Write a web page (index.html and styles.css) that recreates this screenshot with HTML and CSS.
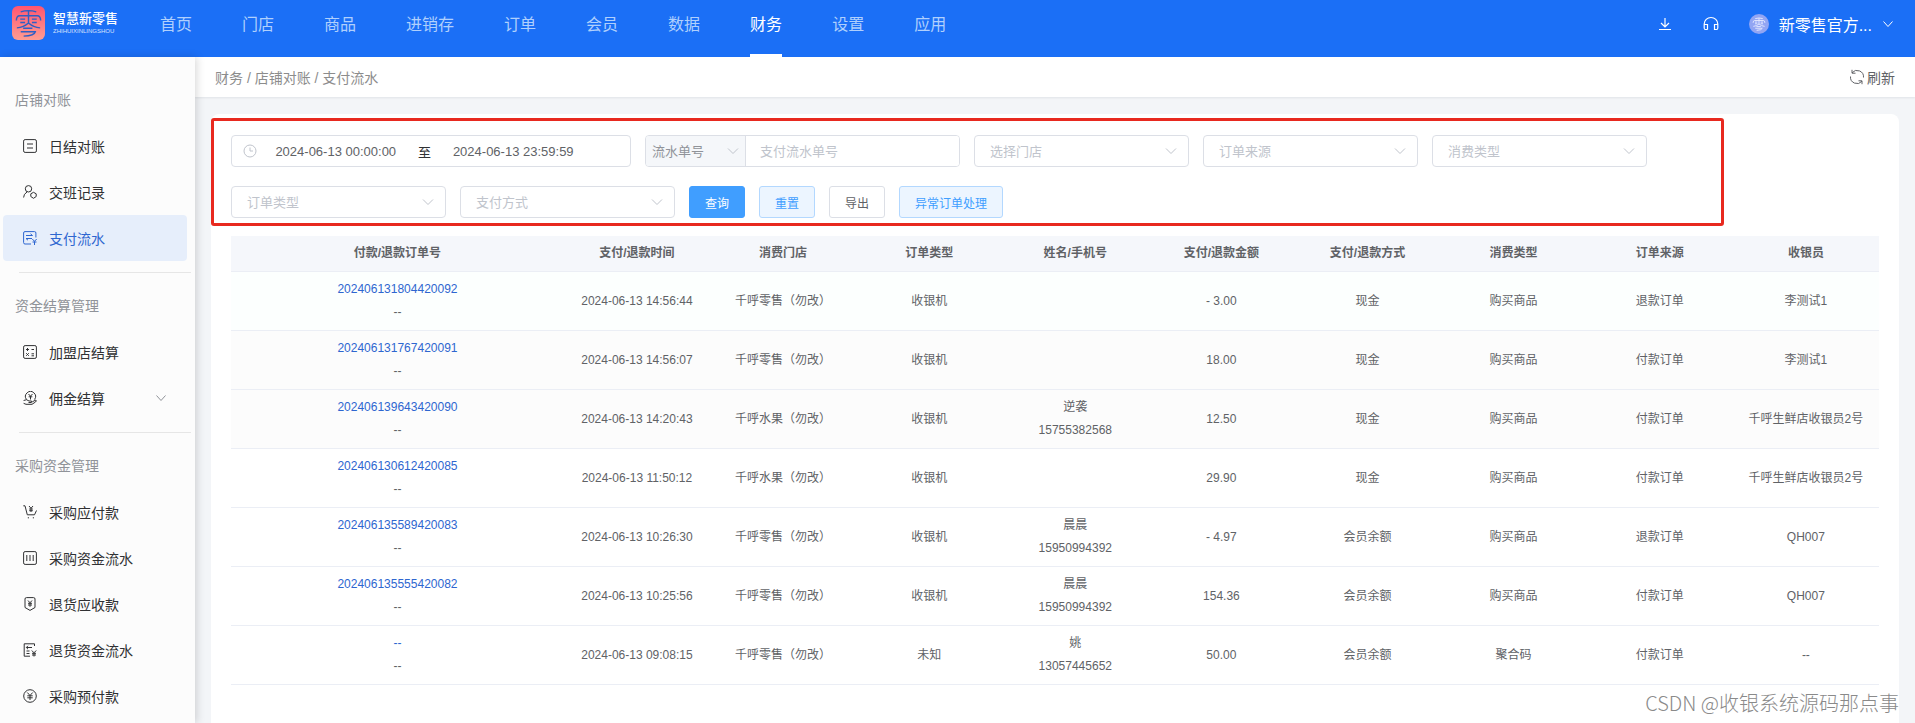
FILE: index.html
```html
<!DOCTYPE html>
<html lang="zh-CN">
<head>
  <meta charset="UTF-8">
  <title>支付流水</title>
  <meta name="viewport" content="width=device-width, initial-scale=1">
  <link rel="stylesheet" href="styles.css">
</head>
<body>

<svg class="sprite" aria-hidden="true">
  <symbol id="mark" viewBox="0 0 34 34">
    <path d="M9 5.500Q17 3 25 5.500M17 4.500V17M4.500 14.500Q4.500 9.500 8 9.500H26Q29.500 9.500 29.500 14.500M8.500 13H13.500M20.500 13H25.500M8.500 16.500H13.500M20.500 16.500H25.500M5 22Q12 21.500 17 17Q22 21.500 29 22M11.500 22.500H21M9 26H24Q23 30 12 30.500"/>
  </symbol>
  <symbol id="down" viewBox="0 0 12 12">
    <path d="M1.500 3.500L6 8.500L10.500 3.500"/>
  </symbol>
</svg>

<header class="header">
  <a class="logo" href="#">
    <span class="logo-mark"><svg><use href="#mark"/></svg></span>
    <span class="logo-text">
      <b>智慧新零售</b>
      <small>ZHIHUIXINLINGSHOU</small>
    </span>
  </a>
  <nav class="nav">
    <a href="#">首页</a>
    <a href="#">门店</a>
    <a href="#">商品</a>
    <a href="#">进销存</a>
    <a href="#">订单</a>
    <a href="#">会员</a>
    <a href="#">数据</a>
    <a href="#" class="active">财务</a>
    <a href="#">设置</a>
    <a href="#">应用</a>
  </nav>
  <div class="tools">
    <button class="tool" aria-label="下载">
      <svg viewBox="0 0 16 16"><path d="M8 2V10.500M4 7L8 11L12 7M2 13.500H14"/></svg>
    </button>
    <button class="tool" aria-label="客服">
      <svg viewBox="0 0 16 16"><path d="M4.500 13.500H2.500Q1.200 13.500 1.200 12V8A6.800 6.500 0 0 1 14.800 8V12Q14.800 13.500 13.500 13.500H11.500V8.500H14.800M1.200 8.500H4.500V13.500"/></svg>
    </button>
    <button class="account">
      <span class="avatar"><svg><use href="#mark"/></svg></span>
      <span>新零售官方...</span>
      <svg class="account-arrow"><use href="#down"/></svg>
    </button>
  </div>
</header>

<div class="layout">
  <aside class="sidebar">
    <section class="menu">
      <h2>店铺对账</h2>
      <a href="#">
        <svg viewBox="0 0 14 14"><rect x=".6" y=".6" width="12.800" height="12.800" rx="1.500"/><path d="M4 5H10M4 9H10"/></svg>
        日结对账
      </a>
      <a href="#">
        <svg viewBox="0 0 14 14"><circle cx="5.500" cy="3.800" r="3.200"/><path d="M.6 12.500Q.6 9 4 7M10.500 7.300L13.200 8.800V11.500L10.500 13.300L7.800 11.500V8.800Z"/></svg>
        交班记录
      </a>
      <a href="#" class="active">
        <svg viewBox="0 0 14 14"><path d="M8 13H2Q.6 13 .6 11.600V2Q.6 .6 2 .6H11.500Q12.900 .6 12.900 2V6.500M3 4.500H9.500L7.500 2.800M9 7.500H3L5 9.200M9.300 8L11.500 10.300L13.700 8M11.500 10.300V14M9.500 11H13.500"/></svg>
        支付流水
      </a>
    </section>
    <section class="menu">
      <h2>资金结算管理</h2>
      <a href="#">
        <svg viewBox="0 0 14 14"><rect x=".6" y=".6" width="12.800" height="12.800" rx="1.500"/><path d="M3 4.500H6M4.500 3V6M8.500 4.500H11M3.200 8.200L5.800 10.800M5.800 8.200L3.200 10.800M8.500 8.800H11M8.500 10.800H11"/></svg>
        加盟店结算
      </a>
      <a href="#">
        <svg viewBox="0 0 14 14"><path d="M3.500 8.500A5 5 0 1 1 11.500 8.500M5.500 3L7.500 5.200L9.500 3M7.500 5.200V8.500M5.700 5.800H9.300M.6 9.500L3.500 8.700L6 10H8.500Q9.500 11.500 8 11.500H5.500M9.300 10.800L12.800 9Q13.800 10 12.500 11L9 13.300H3L.6 12.300"/></svg>
        佣金结算
        <svg class="menu-arrow"><use href="#down"/></svg>
      </a>
    </section>
    <section class="menu">
      <h2>采购资金管理</h2>
      <a href="#">
        <svg viewBox="0 0 14 14"><path d="M.3 .8H2L4.300 9.800H11.500L13.500 5.500M6 1L8 3.300L10 1M8 3.300V7M6.200 4H9.800M6.200 5.700H9.800M4.800 12.800H6M9.800 12.800H11"/></svg>
        采购应付款
      </a>
      <a href="#">
        <svg viewBox="0 0 14 14"><rect x=".6" y=".6" width="12.800" height="12.800" rx="1.500"/><path d="M3.800 4V10M7 4V10M10.200 4V10"/></svg>
        采购资金流水
      </a>
      <a href="#">
        <svg viewBox="0 0 14 14"><path d="M2 2Q2 .6 3.500 .6H10.500Q12 .6 12 2V10.500L7 13.400L2 10.500ZM5 3.500L7 5.800L9 3.500M7 5.800V9.800M5 6.300H9M5 8H9"/></svg>
        退货应收款
      </a>
      <a href="#">
        <svg viewBox="0 0 14 14"><path d="M7 13.200H1.200V.8H11.500V3M3.500 4.500H9M5 2.800L3.300 4.500L5 6.200M3.500 8H6.500M3.500 10.500H6.500M8.800 7.500L11 9.800L13.200 7.500M11 9.800V13.500M9 10.300H13M9 12H13"/></svg>
        退货资金流水
      </a>
      <a href="#">
        <svg viewBox="0 0 14 14"><circle cx="7" cy="7" r="6.300"/><path d="M4.300 3.500L7 6.500L9.700 3.500M7 6.500V11M4.300 6.800H9.700M4.300 8.800H9.700"/></svg>
        采购预付款
      </a>
    </section>
  </aside>

  <main class="main">
    <div class="topbar">
      <div class="crumbs">财务 / 店铺对账 / 支付流水</div>
      <button class="refresh">
        <svg viewBox="0 0 16 16"><path d="M3 3.800A6.500 6.500 0 0 1 14.500 8.500M13 12.200A6.500 6.500 0 0 1 1.500 7.500M3 .8V4.200H6.500M13 15.200V11.800H9.500"/></svg>刷新
      </button>
    </div>

    <div class="card">
      <form class="filters">
        <div class="date-range">
          <svg viewBox="0 0 14 14"><circle cx="7" cy="7" r="6"/><path d="M7 3.500V7H10"/></svg>
          <input type="text" aria-label="开始时间" value="2024-06-13 00:00:00">
          <span>至</span>
          <input type="text" aria-label="结束时间" value="2024-06-13 23:59:59">
        </div>
        <div class="combo">
          <select aria-label="单号类型"><option>流水单号</option></select>
          <input type="text" aria-label="支付流水单号" placeholder="支付流水单号">
        </div>
        <select class="select" aria-label="选择门店"><option>选择门店</option></select>
        <select class="select" aria-label="订单来源"><option>订单来源</option></select>
        <select class="select" aria-label="消费类型"><option>消费类型</option></select>
        <select class="select" aria-label="订单类型"><option>订单类型</option></select>
        <select class="select" aria-label="支付方式"><option>支付方式</option></select>
        <button type="button" class="btn primary">查询</button>
        <button type="button" class="btn plain">重置</button>
        <button type="button" class="btn">导出</button>
        <button type="button" class="btn plain">异常订单处理</button>
      </form>

      <table class="table">
        <thead>
          <tr>
            <th class="col-order">付款/退款订单号</th>
            <th>支付/退款时间</th>
            <th>消费门店</th>
            <th>订单类型</th>
            <th>姓名/手机号</th>
            <th>支付/退款金额</th>
            <th>支付/退款方式</th>
            <th>消费类型</th>
            <th>订单来源</th>
            <th>收银员</th>
          </tr>
        </thead>
        <tbody>
          <tr class="hover">
            <td><a href="#">202406131804420092</a><br>--</td>
            <td>2024-06-13 14:56:44</td>
            <td>千呼零售（勿改）</td>
            <td>收银机</td>
            <td></td>
            <td>- 3.00</td>
            <td>现金</td>
            <td>购买商品</td>
            <td>退款订单</td>
            <td>李测试1</td>
          </tr>
          <tr class="shade">
            <td><a href="#">202406131767420091</a><br>--</td>
            <td>2024-06-13 14:56:07</td>
            <td>千呼零售（勿改）</td>
            <td>收银机</td>
            <td></td>
            <td>18.00</td>
            <td>现金</td>
            <td>购买商品</td>
            <td>付款订单</td>
            <td>李测试1</td>
          </tr>
          <tr class="shade">
            <td><a href="#">202406139643420090</a><br>--</td>
            <td>2024-06-13 14:20:43</td>
            <td>千呼水果（勿改）</td>
            <td>收银机</td>
            <td>逆袭<br>15755382568</td>
            <td>12.50</td>
            <td>现金</td>
            <td>购买商品</td>
            <td>付款订单</td>
            <td>千呼生鲜店收银员2号</td>
          </tr>
          <tr>
            <td><a href="#">202406130612420085</a><br>--</td>
            <td>2024-06-13 11:50:12</td>
            <td>千呼水果（勿改）</td>
            <td>收银机</td>
            <td></td>
            <td>29.90</td>
            <td>现金</td>
            <td>购买商品</td>
            <td>付款订单</td>
            <td>千呼生鲜店收银员2号</td>
          </tr>
          <tr>
            <td><a href="#">202406135589420083</a><br>--</td>
            <td>2024-06-13 10:26:30</td>
            <td>千呼零售（勿改）</td>
            <td>收银机</td>
            <td>晨晨<br>15950994392</td>
            <td>- 4.97</td>
            <td>会员余额</td>
            <td>购买商品</td>
            <td>退款订单</td>
            <td>QH007</td>
          </tr>
          <tr>
            <td><a href="#">202406135555420082</a><br>--</td>
            <td>2024-06-13 10:25:56</td>
            <td>千呼零售（勿改）</td>
            <td>收银机</td>
            <td>晨晨<br>15950994392</td>
            <td>154.36</td>
            <td>会员余额</td>
            <td>购买商品</td>
            <td>付款订单</td>
            <td>QH007</td>
          </tr>
          <tr>
            <td><a href="#">--</a><br>--</td>
            <td>2024-06-13 09:08:15</td>
            <td>千呼零售（勿改）</td>
            <td>未知</td>
            <td>姚<br>13057445652</td>
            <td>50.00</td>
            <td>会员余额</td>
            <td>聚合码</td>
            <td>付款订单</td>
            <td>--</td>
          </tr>
        </tbody>
      </table>
    </div>
  </main>
</div>

<div class="watermark">CSDN @收银系统源码那点事</div>

</body>
</html>
```
FILE: styles.css
```css
* {
  box-sizing: border-box;
}

body {
  margin: 0;
  height: 100vh;
  display: flex;
  flex-direction: column;
  overflow: hidden;
  background: #f3f5f8;
  color: #606266;
  font-family: "Liberation Sans", "Noto Sans CJK SC", sans-serif;
  font-size: 14px;
}

a {
  text-decoration: none;
}

button,
input,
select {
  font-family: inherit;
  margin: 0;
}

button {
  cursor: pointer;
}

svg {
  fill: none;
  stroke: currentColor;
  flex: none;
}

.sprite {
  display: none;
}

/* header */
.header {
  flex: none;
  height: 57px;
  display: flex;
  background: #1b6ff6;
  color: #fff;
}

.logo {
  width: 160px;
  padding: 6px 0 0 12px;
  display: flex;
  gap: 8px;
  color: #fff;
}

.logo-mark {
  width: 33px;
  height: 34px;
  border-radius: 6px;
  background: linear-gradient(#ff5570, #ff9d92);
  color: #2f5fc4;
}

.logo-mark svg {
  width: 33px;
  height: 34px;
  stroke-width: 1.5;
}

.logo-text {
  display: flex;
  flex-direction: column;
  padding-top: 5px;
}

.logo-text b {
  font-size: 13px;
  line-height: 16px;
  font-weight: 500;
}

.logo-text small {
  font-size: 6px;
  line-height: 8px;
  opacity: 0.8;
}

.nav {
  display: flex;
  gap: 50px;
}

.nav a {
  height: 57px;
  line-height: 50px;
  font-size: 16px;
  color: #b0d0fd;
  border-bottom: 3px solid transparent;
}

.nav a.active {
  color: #fff;
  border-bottom-color: #fff;
}

.tools {
  margin-left: auto;
  height: 48px;
  padding-right: 21px;
  display: flex;
  align-items: center;
}

.tools button {
  display: flex;
  align-items: center;
  padding: 0;
  border: 0;
  background: none;
  color: #fff;
  font-size: 16px;
}

.tool svg {
  width: 16px;
  height: 16px;
  stroke-width: 1.2;
}

.tools .tool {
  margin-right: 30px;
}

.account span + svg {
  margin-left: 10px;
}

.avatar {
  width: 20px;
  height: 20px;
  margin-right: 10px;
  border-radius: 50%;
  background: #92a5f3;
  color: #e4e9ff;
}

.avatar svg {
  display: block;
  width: 20px;
  height: 20px;
  padding: 2px;
  stroke-width: 2;
}

.account-arrow {
  width: 12px;
  height: 12px;
}

/* sidebar */
.layout {
  flex: 1;
  min-height: 0;
  display: flex;
}

.sidebar {
  flex: none;
  width: 195px;
  padding-top: 20px;
  background: #fcfcfc;
  box-shadow: 2px 0 8px rgba(0, 0, 0, 0.15);
  z-index: 1;
}

.menu h2 {
  margin: 0;
  padding-left: 15px;
  line-height: 46px;
  font-size: 14px;
  font-weight: normal;
  color: #909399;
}

.menu + .menu::before {
  content: "";
  display: block;
  height: 1px;
  margin: 11px 4px 10px 19px;
  background: #e6e6e6;
}

.menu a {
  display: flex;
  align-items: center;
  gap: 12px;
  height: 46px;
  margin: 0 8px 0 3px;
  padding: 0 20px;
  border-radius: 4px;
  color: #303133;
}

.menu a.active {
  background: #e6eefb;
  color: #2e66d0;
}

.menu svg {
  width: 14px;
  height: 14px;
}

.menu .menu-arrow {
  width: 12px;
  height: 12px;
  margin-left: auto;
  color: #909399;
}

/* content */
.main {
  flex: 1;
  min-width: 0;
  display: flex;
  flex-direction: column;
}

.topbar {
  flex: none;
  height: 40px;
  padding: 0 20px;
  display: flex;
  align-items: center;
  justify-content: space-between;
  background: #fff;
  box-shadow: 0 1px 2px rgba(0, 21, 41, 0.08);
}

.crumbs {
  color: #8c8c8c;
}

.refresh {
  display: flex;
  align-items: center;
  gap: 2px;
  padding: 0;
  border: 0;
  background: none;
  color: #606266;
  font-size: 14px;
}

.refresh svg {
  width: 16px;
  height: 16px;
}

.card {
  flex: 1;
  margin: 17px 16px 0;
  padding-top: 4px;
  background: #fff;
  border-radius: 8px 8px 0 0;
}

.filters {
  display: flex;
  flex-wrap: wrap;
  gap: 19px 14px;
  margin-right: 175px;
  padding: 14px 16px 5px 17px;
  border: 3px solid #e8291f;
  border-radius: 3px;
}

.select,
.date-range,
.combo {
  height: 32px;
  border: 1px solid #dcdfe6;
  border-radius: 4px;
  background-color: #fff;
  font-size: 13px;
}

.filters select {
  appearance: none;
  background-image: url("data:image/svg+xml,%3Csvg xmlns='http://www.w3.org/2000/svg' viewBox='0 0 12 12' fill='none' stroke='%23c0c4cc'%3E%3Cpath d='M1 3.500L6 8.500L11 3.500'/%3E%3C/svg%3E");
  background-repeat: no-repeat;
  background-size: 12px 12px;
  font-size: 13px;
}

.select {
  width: 215px;
  padding: 0 30px 0 15px;
  background-position: right 11px center;
  color: #c0c4cc;
}

.date-range {
  width: 400px;
  padding: 0 42px 0 11px;
  display: flex;
  align-items: center;
}

.date-range svg {
  width: 14px;
  height: 14px;
  margin-right: 4px;
  color: #c0c4cc;
}

.date-range input {
  flex: 1;
  width: 0;
  padding: 0;
  border: 0;
  background: none;
  text-align: center;
  font-size: 13px;
  color: #606266;
}

.date-range span {
  width: 28px;
  text-align: center;
  color: #303133;
}

.combo {
  width: 315px;
  display: flex;
  overflow: hidden;
}

.combo select {
  width: 100px;
  padding: 0 24px 0 6px;
  border: 0;
  border-right: 1px solid #dcdfe6;
  background-color: #f5f7fa;
  background-position: right 6px center;
  color: #909399;
}

.combo input {
  flex: 1;
  min-width: 0;
  padding: 0 14px;
  border: 0;
  font-size: 13px;
}

.combo input::placeholder {
  color: #c0c4cc;
}

.btn {
  height: 32px;
  padding: 0 15px;
  border: 1px solid #dcdfe6;
  border-radius: 3px;
  background: #fff;
  color: #606266;
  font-size: 12px;
}

.btn.primary {
  background: #409eff;
  border-color: #409eff;
  color: #fff;
}

.btn.plain {
  background: #ecf5ff;
  border-color: #b3d8ff;
  color: #409eff;
}

/* table */
.table {
  width: calc(100% - 40px);
  margin: 10px 20px 0;
  table-layout: fixed;
  border-collapse: separate;
  border-spacing: 0;
  text-align: center;
  font-size: 12px;
  line-height: 23px;
}

.table th {
  padding: 6px 0;
  background: #f5f7fb;
  border-bottom: 1px solid #ebeef5;
}

.table td {
  padding: 6px 0;
  border-bottom: 1px solid #ebeef5;
}

.table .col-order {
  width: 20.2%;
}

.table td a {
  color: #2e66d0;
}

.table .hover td {
  background: #fcfffe;
}

.table .shade td {
  background: #fcfcfc;
}

/* overlay text at the page corner */
.watermark {
  position: absolute;
  right: 16px;
  bottom: 5px;
  z-index: 2;
  font-family: "Noto Sans CJK SC", sans-serif;
  font-weight: 300;
  font-size: 20px;
  line-height: 30px;
  color: #8a8a8a;
}
```
